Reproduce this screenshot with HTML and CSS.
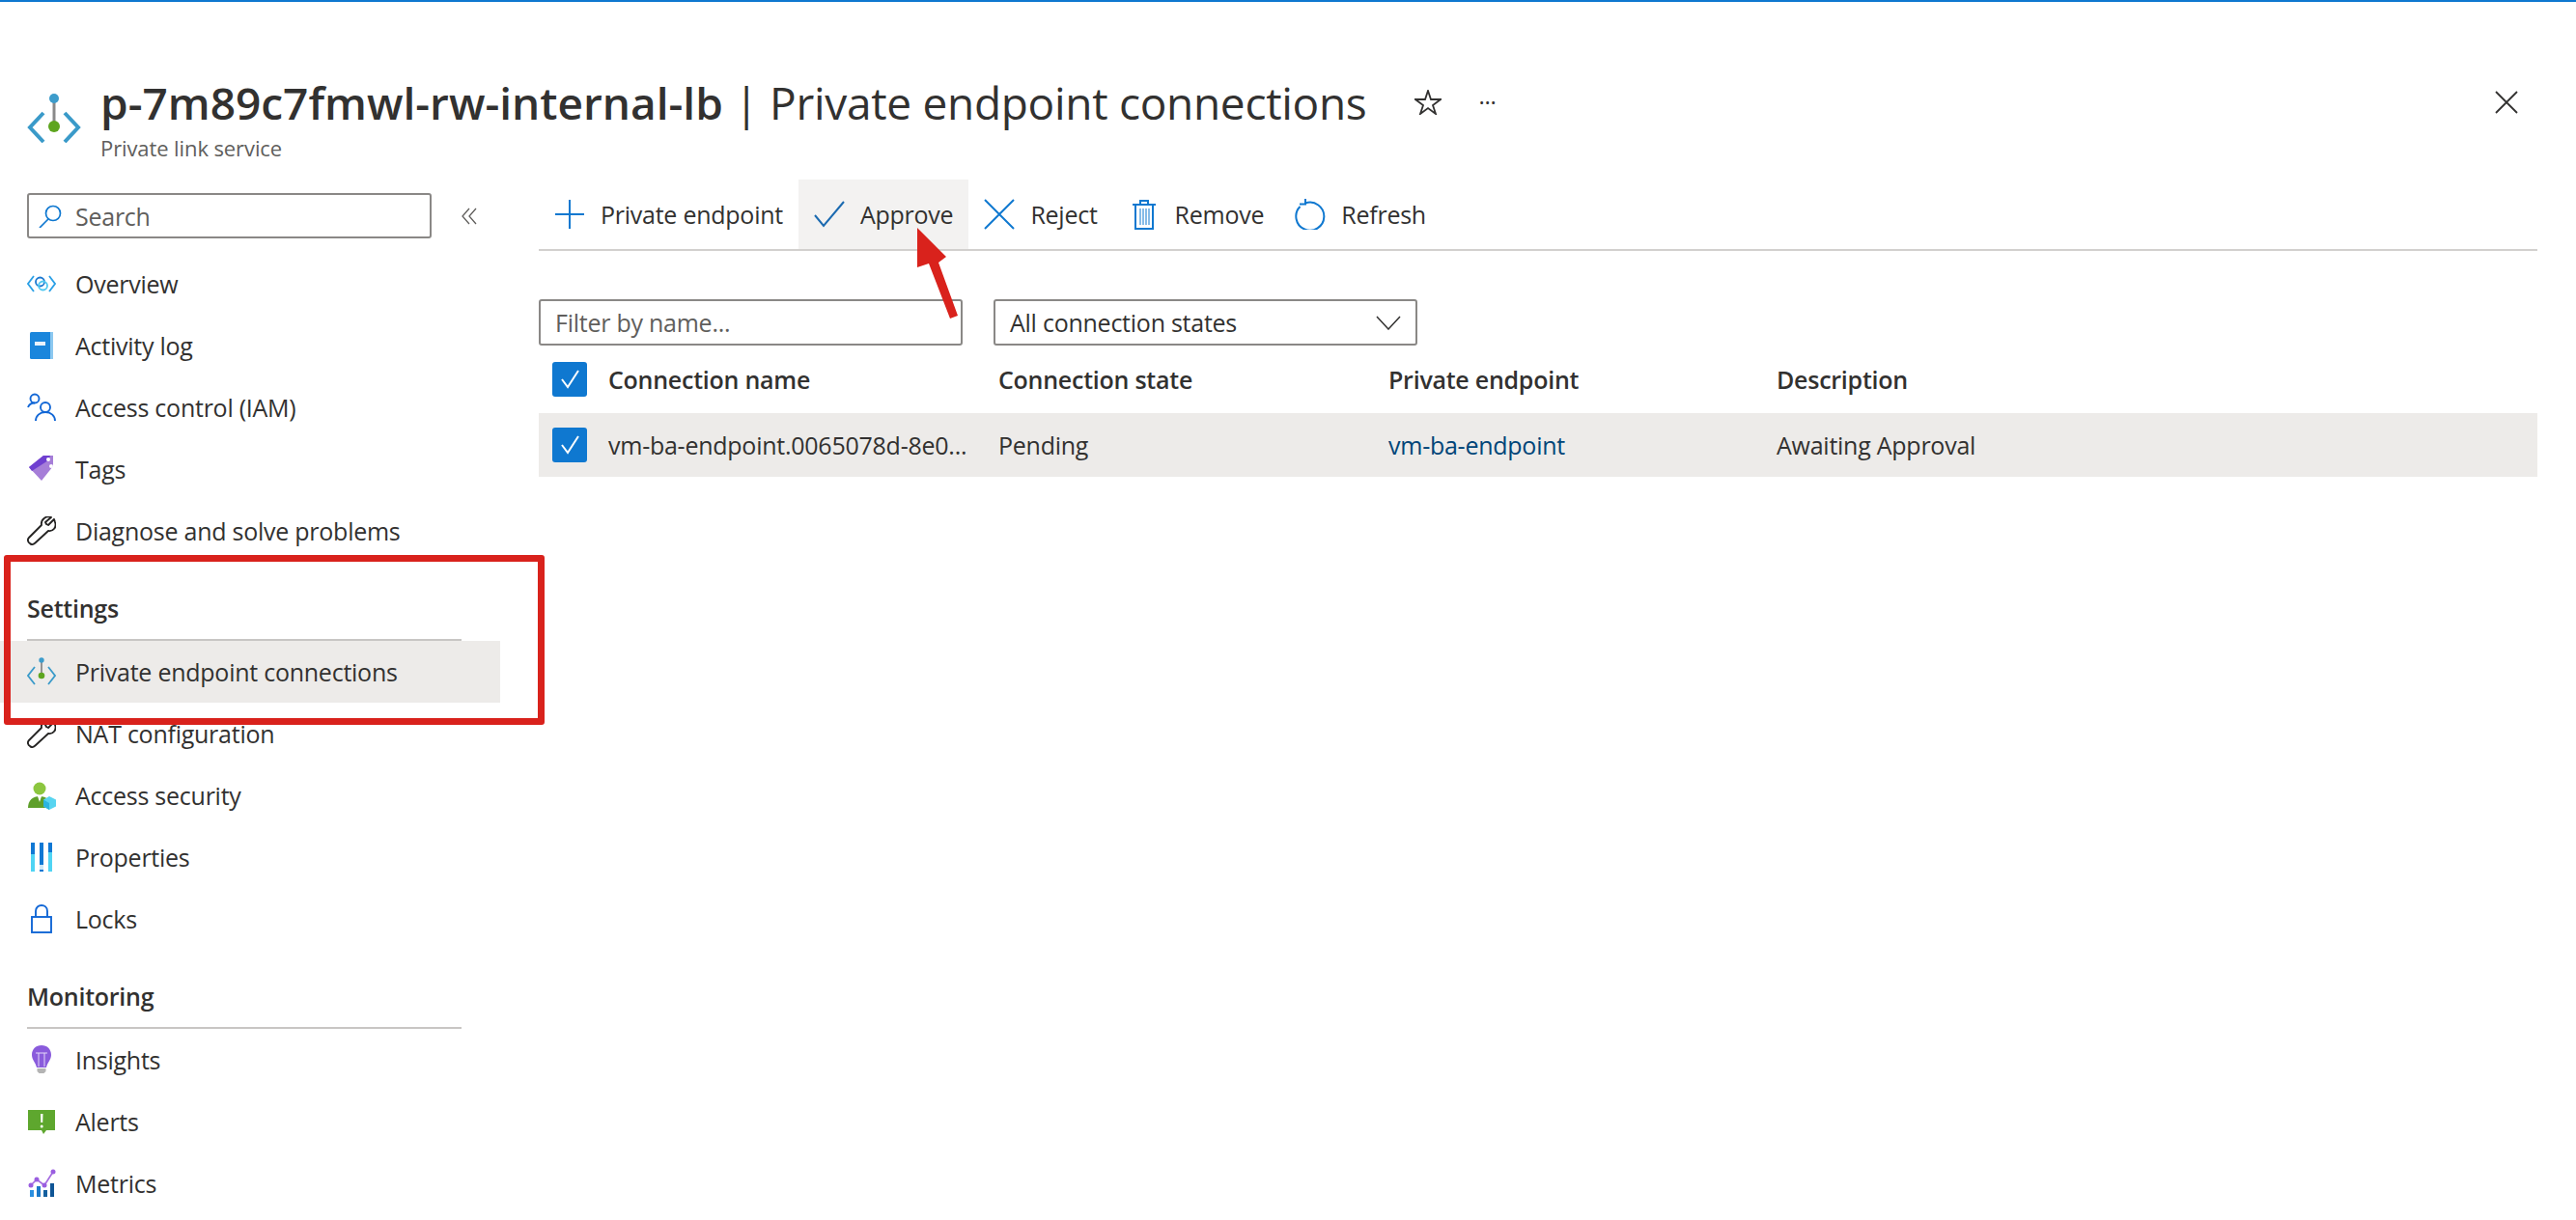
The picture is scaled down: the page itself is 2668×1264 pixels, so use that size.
FILE: index.html
```html
<!DOCTYPE html>
<html lang="en">
<head>
<meta charset="utf-8">
<title>Private endpoint connections</title>
<link rel="stylesheet" href="styles.css">
</head>
<body>
<div class="app">
  <div class="topline"></div>
  <header class="header">
    <svg class="res-icon" viewBox="0 0 56 52"><path d="M17 21 3 36l14 15" fill="none" stroke="#3a9ac9" stroke-width="4"/><path d="M39 21l14 15-14 15" fill="none" stroke="#3a9ac9" stroke-width="4"/><path d="M28 6v28" stroke="#8a8a8a" stroke-width="3"/><circle cx="28" cy="6" r="5" fill="#3d9ccb"/><circle cx="28" cy="35" r="6" fill="#5ea51f"/></svg>
    <div class="title-block">
      <div class="title-line">
        <h1 class="title"><span class="title-strong">p-7m89c7fmwl-rw-internal-lb</span><span class="title-rest"> | Private endpoint connections</span></h1>
        <svg class="star" viewBox="0 0 28 26"><path d="M14 1l3 9h10l-8 6 3 9-8-6-8 6 3-9-8-6h10z" fill="none" stroke="#323130" stroke-width="1.800"/></svg>
        <span class="more">···</span>
      </div>
      <div class="subtitle">Private link service</div>
    </div>
    <svg class="close" viewBox="0 0 24 24"><path d="M1 1l22 22M23 1 1 23" stroke="#323130" stroke-width="1.800"/></svg>
  </header>
  <div class="body">
    <aside class="sidebar">
      <div class="search-row">
        <div class="search">
          <svg class="search-icon" viewBox="0 0 24 24"><circle cx="15" cy="9" r="7.500" fill="none" stroke="#0f78d0" stroke-width="1.700"/><path d="M10 15 1 24" stroke="#0f78d0" stroke-width="1.700"/></svg>
          <span>Search</span>
        </div>
        <svg class="collapse" viewBox="0 0 16 18"><path d="M8 1 1 9l7 8M15 1 8 9l7 8" fill="none" stroke="#605e5c" stroke-width="1.300"/></svg>
      </div>
      <nav class="nav">
        <a class="item"><svg class="ico" viewBox="0 0 30 30"><path d="M7 7 1 15l6 8M23 7l6 8-6 8" fill="none" stroke="#2aa0e6" stroke-width="1.800"/><circle cx="13.500" cy="13" r="4.500" fill="none" stroke="#1b78d0" stroke-width="1.800"/><circle cx="16.500" cy="17" r="4.500" fill="none" stroke="#50c8f0" stroke-width="1.800"/></svg>Overview</a>
        <a class="item"><svg class="ico" viewBox="0 0 30 30"><rect x="3" y="1" width="24" height="28" rx="1.500" fill="#1a86dc"/><rect x="24" y="1" width="3" height="28" fill="#8cc8f0"/><rect x="8" y="11" width="11" height="4" fill="#e8f2fb"/></svg>Activity log</a>
        <a class="item"><svg class="ico" viewBox="0 0 30 30"><g fill="none" stroke="#1267d6" stroke-width="1.900"><circle cx="8" cy="6" r="4.500"/><circle cx="19" cy="15" r="5"/><path d="M1 15c1-3 4-4.500 7-4.500"/><path d="M9 29c0-5 4-9 10-9s10 4 10 9"/></g></svg>Access control (IAM)</a>
        <a class="item"><svg class="ico" viewBox="0 0 30 30"><path d="M2 13 17 1h10v11L15 27z" fill="#a67ed8"/><path d="M2 13 17 1h7l-2 5L5 17z" fill="#6f3fd0"/><circle cx="22" cy="5" r="2" fill="#fff"/><circle cx="25" cy="12" r="2" fill="#fff"/></svg>Tags</a>
        <a class="item"><svg class="ico" viewBox="0 0 30 30"><path d="M28 3l-6 6-2-1-1-2 6-5c-5-2-11 2-10 8L2 22c-2 2-1 5 1 6 2 2 4 1 6-1l13-12c5 1 9-4 7-9z" fill="none" stroke="#252423" stroke-width="1.900" stroke-linejoin="round"/></svg>Diagnose and solve problems</a>
        <div class="section">Settings</div>
        <a class="item active"><svg class="ico" viewBox="0 0 30 30"><path d="M8 10 1 19l7 9M22 10l7 9-7 9" fill="none" stroke="#3a9ac9" stroke-width="1.800"/><path d="M15 2v17" stroke="#8a8a8a" stroke-width="1.800"/><circle cx="15" cy="3" r="2.700" fill="#3d9ccb"/><circle cx="15" cy="19" r="3.300" fill="#5ea51f"/></svg>Private endpoint connections</a>
        <a class="item"><svg class="ico" viewBox="0 0 30 30"><path d="M28 3l-6 6-2-1-1-2 6-5c-5-2-11 2-10 8L2 22c-2 2-1 5 1 6 2 2 4 1 6-1l13-12c5 1 9-4 7-9z" fill="none" stroke="#252423" stroke-width="1.900" stroke-linejoin="round"/></svg>NAT configuration</a>
        <a class="item"><svg class="ico" viewBox="0 0 30 30"><circle cx="13" cy="8" r="6.500" fill="#8cc63f"/><path d="M1 28c0-8 5-12 12-12s12 4 12 12z" fill="#5e9f2a"/><path d="M11 16h4l-2 6z" fill="#fff"/><path d="M23 16l7 3.500v7L23 30l-6-3.500v-7z" fill="#58d4f0"/><path d="M23 23v7l-6-3.500v-7z" fill="#2bb4e0"/></svg>Access security</a>
        <a class="item"><svg class="ico" viewBox="0 0 30 30"><rect x="4" y="0" width="4" height="30" fill="#4fd4f4"/><rect x="4" y="0" width="4" height="12" fill="#1078d4"/><rect x="13" y="0" width="4" height="30" fill="#1078d4"/><rect x="13" y="23" width="4" height="5" fill="#cde8f8"/><rect x="22" y="0" width="4" height="30" fill="#4fd4f4"/><rect x="22" y="0" width="4" height="10" fill="#1078d4"/></svg>Properties</a>
        <a class="item"><svg class="ico" viewBox="0 0 30 30"><path d="M9 13V7c0-8 12-8 12 0v6" fill="none" stroke="#1267d6" stroke-width="1.900"/><rect x="5" y="13" width="20" height="16" fill="none" stroke="#1267d6" stroke-width="1.900"/></svg>Locks</a>
        <div class="section">Monitoring</div>
        <a class="item"><svg class="ico" viewBox="0 0 30 30"><path d="M15 0c6 0 10 4 10 10 0 5-4 8-5 13h-10c-1-5-5-8-5-13C5 4 9 0 15 0z" fill="#8a5bdc"/><path d="M12 8v14M18 8v14M9 8h12" stroke="#e4d8f8" stroke-width="1" fill="none"/><path d="M10.500 24h9v3l-2 2h-5l-2-2z" fill="#b4b4b4"/></svg>Insights</a>
        <a class="item"><svg class="ico" viewBox="0 0 30 30"><path d="M1 3h28v21H20l-3 4-2-4H1z" fill="#5ea72e"/><path d="M14 7h2.500l-.3 9h-1.900z" fill="#fff"/><circle cx="15.200" cy="20" r="1.500" fill="#fff"/></svg>Alerts</a>
        <a class="item"><svg class="ico" viewBox="0 0 30 30"><rect x="3" y="22" width="4" height="7" fill="#2a8fe0"/><rect x="10" y="18" width="4" height="11" fill="#1b78c8"/><rect x="17" y="22" width="4" height="7" fill="#145f9e"/><rect x="24" y="15" width="4" height="14" fill="#0f5596"/><path d="M4 17l6-6 8 6 9-14" fill="none" stroke="#a56ce0" stroke-width="1.700"/><circle cx="4" cy="17" r="2.500" fill="#9a5ee0"/><circle cx="10" cy="11" r="2.500" fill="#9a5ee0"/><circle cx="18" cy="17" r="2.500" fill="#9a5ee0"/><circle cx="27" cy="3" r="2.500" fill="#9a5ee0"/></svg>Metrics</a>
      </nav>
    </aside>
    <main class="main">
      <div class="toolbar">
        <button class="tool"><svg class="tool-ico" viewBox="0 0 32 32"><path d="M16 1v30M1 16h30" stroke="#0f78d0" stroke-width="2"/></svg>Private endpoint</button>
        <button class="tool tool-hover"><svg class="tool-ico" viewBox="0 0 32 32"><path d="M1 17l9 11L31 3" fill="none" stroke="#1b6ab0" stroke-width="2"/></svg>Approve</button>
        <button class="tool"><svg class="tool-ico" viewBox="0 0 32 32"><path d="M1 1l30 30M31 1 1 31" stroke="#0f78d0" stroke-width="2"/></svg>Reject</button>
        <button class="tool"><svg class="tool-ico" viewBox="0 0 32 32"><path d="M4 6h24M12 6V2h8v4M7 6v25h18V6" fill="none" stroke="#0f78d0" stroke-width="2"/><path d="M12 10v17M15 10v17M18 10v17M21 10v17" stroke="#0f78d0" stroke-width="1"/></svg>Remove</button>
        <button class="tool"><svg class="tool-ico" viewBox="0 0 32 32"><path d="M11 4.500A14.500 14.500 0 1 1 5.500 8" fill="none" stroke="#0f78d0" stroke-width="2"/><path d="M11 0v5.500H5" fill="none" stroke="#0f78d0" stroke-width="2"/></svg>Refresh</button>
      </div>
      <div class="filters">
        <div class="field placeholder">Filter by name...</div>
        <div class="field select">All connection states<svg class="chev" viewBox="0 0 26 15"><path d="M1 1l12 13L25 1" fill="none" stroke="#323130" stroke-width="1.500"/></svg></div>
      </div>
      <div class="grid head">
        <span class="check"><svg viewBox="0 0 36 36"><path d="M10 18l6 8L27 9" fill="none" stroke="#fff" stroke-width="2"/></svg></span>
        <span>Connection name</span><span>Connection state</span><span>Private endpoint</span><span>Description</span>
      </div>
      <div class="grid row">
        <span class="check"><svg viewBox="0 0 36 36"><path d="M10 18l6 8L27 9" fill="none" stroke="#fff" stroke-width="2"/></svg></span>
        <span>vm-ba-endpoint.0065078d-8e0...</span><span>Pending</span><a class="link">vm-ba-endpoint</a><span>Awaiting Approval</span>
      </div>
    </main>
  </div>
  <div class="redbox"></div>
  <svg class="arrow" viewBox="0 0 60 110"><path d="M4 0V41l12-4 22 57 8-3-20-55 8-6z" fill="#d9221c"/></svg>
</div>
</body>
</html>
```
FILE: styles.css
```css
* { box-sizing: border-box; }
html, body { margin: 0; height: 100%; overflow: hidden; background: #fff; }
body { font-family: "Open Sans", "Noto Sans", sans-serif; font-size: 25px; letter-spacing: -0.25px; color: #323130; }
.app { position: relative; height: 1264px; overflow: hidden; }
.topline { height: 2px; background: #0f78d0; }
.header { height: 184px; display: flex; align-items: flex-start; padding: 74px 60px 0 28px; }
.res-icon { width: 56px; height: 52px; margin-top: 20px; margin-right: 20px; flex: none; }
.title-block { flex: 1; }
.title-line { display: flex; align-items: center; height: 60px; }
.title { margin: 0; font-size: 46px; font-weight: 400; line-height: 60px; white-space: nowrap; letter-spacing: 0; }
.title-strong { font-weight: 600; }
.title-rest { letter-spacing: -0.3px; }
.star { width: 28px; height: 26px; margin-left: 50px; flex: none; }
.more { margin-left: 38px; font-size: 24px; line-height: 24px; color: #323130; }
.subtitle { font-size: 22px; line-height: 30px; margin-top: 2px; color: #605e5c; letter-spacing: -0.1px; }
.close { width: 24px; height: 24px; margin-top: 18px; flex: none; }
.body { display: flex; }
.sidebar { width: 558px; flex: none; padding-top: 14px; }
.search-row { display: flex; align-items: center; padding-left: 28px; height: 47px; }
.search { width: 419px; height: 47px; border: 2px solid #8a8886; border-radius: 3px; display: flex; align-items: center; gap: 14px; padding-left: 10px; color: #605e5c; }
.search-icon { width: 24px; height: 24px; flex: none; }
.collapse { width: 16px; height: 18px; margin-left: 31px; flex: none; }
.nav { margin-top: 15px; display: flex; flex-direction: column; width: 518px; }
.item { height: 64px; display: flex; align-items: center; gap: 20px; padding-left: 28px; color: #323130; white-space: nowrap; }
.item.active { background: #edebe9; }
.ico { width: 30px; height: 30px; flex: none; }
.section { height: 82px; margin-left: 28px; width: 450px; border-bottom: 2px solid #c8c6c4; display: flex; align-items: flex-end; padding-bottom: 15px; font-weight: 600; }
.main { flex: 1; padding-right: 40px; min-width: 0; }
.toolbar { display: flex; height: 74px; border-bottom: 2px solid #d2d0ce; }
.tool { display: flex; align-items: center; height: 72px; gap: 16px; padding: 0 16px; border: 0; background: none; font: inherit; letter-spacing: inherit; color: #323130; white-space: nowrap; }
.tool-hover { background: #f3f2f1; }
.tool-ico { width: 32px; height: 32px; flex: none; }
.filters { display: flex; gap: 32px; margin-top: 50px; }
.field { width: 439px; height: 48px; border: 2px solid #8a8886; border-radius: 3px; display: flex; align-items: center; padding: 0 15px; }
.placeholder { color: #605e5c; }
.select { justify-content: space-between; }
.chev { width: 26px; height: 15px; flex: none; }
.grid { display: grid; grid-template-columns: 72px 404px 404px 402px 1fr; align-items: center; white-space: nowrap; }
.head { height: 70px; font-weight: 600; }
.row { height: 66px; background: #edebe9; }
.check { width: 36px; height: 36px; margin-left: 14px; background: #0f78d0; border-radius: 3px; display: flex; }
.link { color: #004578; }
.redbox { position: absolute; left: 4px; top: 575px; width: 560px; height: 176px; border: 7px solid #d9221c; border-radius: 3px; }
.arrow { position: absolute; left: 946px; top: 236px; width: 60px; height: 110px; }
```
